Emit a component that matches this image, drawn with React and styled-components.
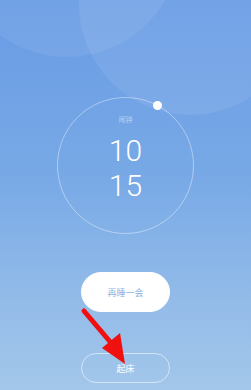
import React from "react";
import styled, { createGlobalStyle } from "styled-components";

const GlobalStyle = createGlobalStyle`
  html, body {
    margin: 0;
    padding: 0;
  }
  body {
    font-family: Roboto, "Noto Sans CJK SC", sans-serif;
  }
`;

const Screen = styled.div`
  position: relative;
  width: 251px;
  height: 390px;
  overflow: hidden;
  background: linear-gradient(180deg, #689be5 0%, #78a9e6 45%, #95bde9 80%, #a3c7ea 100%);
  display: flex;
  flex-direction: column;
  align-items: center;
`;

const Bubble = styled.div`
  position: absolute;
  left: ${(p) => p.$x - p.$r}px;
  top: ${(p) => p.$y - p.$r}px;
  width: ${(p) => p.$r * 2}px;
  height: ${(p) => p.$r * 2}px;
  border-radius: 50%;
  background: rgba(255, 255, 255, ${(p) => p.$alpha});
`;

const Dial = styled.div`
  position: relative;
  box-sizing: border-box;
  margin-top: 97px;
  width: 137px;
  height: 137px;
  border-radius: 50%;
  border: 1px solid rgba(255, 255, 255, 0.4);
  display: flex;
  flex-direction: column;
  align-items: center;
  padding-top: 16px;
`;

const Knob = styled.span`
  position: absolute;
  left: 95px;
  top: 3px;
  width: 9px;
  height: 9px;
  border-radius: 50%;
  background: #fff;
`;

const Label = styled.div`
  font-family: "Noto Sans CJK SC", sans-serif;
  font-size: 7px;
  line-height: 10px;
  color: rgba(255, 255, 255, 0.5);
`;

const Digits = styled.div`
  font-family: Roboto, sans-serif;
  font-weight: 300;
  font-size: 30px;
  line-height: 35px;
  color: #fff;
  margin-top: ${(p) => p.$gap || 0}px;
`;

const Pill = styled.button`
  box-sizing: border-box;
  width: 89px;
  height: ${(p) => (p.$solid ? 40 : 30)}px;
  margin-top: ${(p) => p.$top}px;
  border-radius: 20px;
  border: 1px solid ${(p) => (p.$solid ? "#fff" : "rgba(255,255,255,0.55)")};
  background: ${(p) => (p.$solid ? "#fff" : "transparent")};
  color: ${(p) => (p.$solid ? "#8fb4de" : "#fff")};
  font-family: "Noto Sans CJK SC", sans-serif;
  font-size: 9px;
  padding: 0;
  display: flex;
  align-items: center;
  justify-content: center;
`;

const Arrow = styled.svg`
  position: absolute;
  left: 0;
  top: 0;
  pointer-events: none;
`;

export default function App() {
  return (
    <>
      <GlobalStyle />
      <Screen>
        <Bubble $x={67} $y={-56} $r={113} $alpha={0.07} />
        <Bubble $x={190} $y={4} $r={111} $alpha={0.08} />
        <Dial>
          <Knob />
          <Label>闹钟</Label>
          <Digits $gap={9}>10</Digits>
          <Digits>15</Digits>
        </Dial>
        <Pill $solid $top={38}>再睡一会</Pill>
        <Pill $top={41}>起床</Pill>
        <Arrow width="251" height="390" viewBox="0 0 251 390">
          <line x1="84" y1="311" x2="112" y2="344" stroke="#f01010" strokeWidth="5" strokeLinecap="round" />
          <polygon points="125,364 102,348 120,333" fill="#f01010" />
        </Arrow>
      </Screen>
    </>
  );
}
